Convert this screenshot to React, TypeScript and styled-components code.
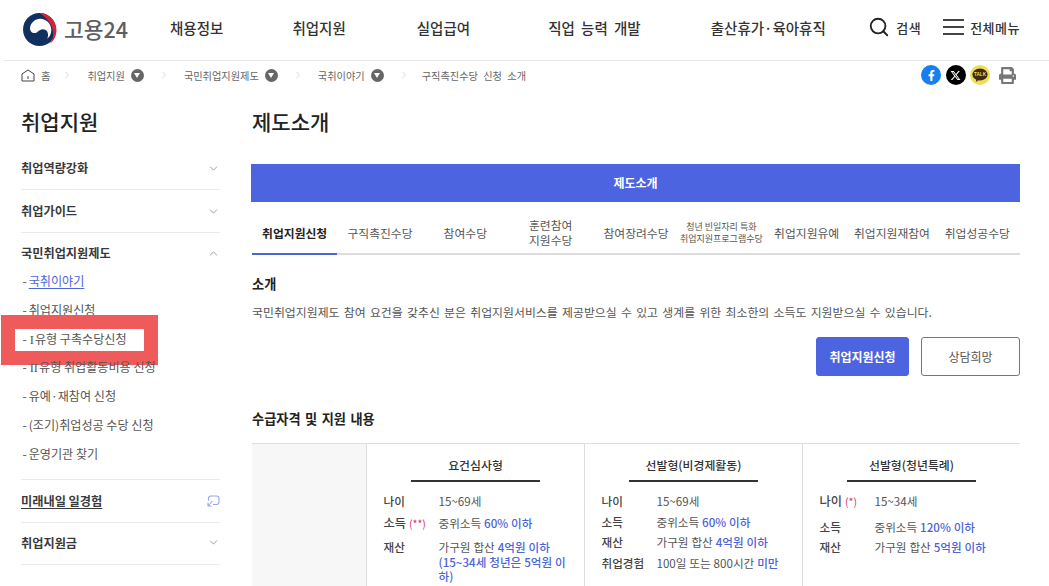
import React from "react";
import styled, { createGlobalStyle } from "styled-components";
import { FaFacebookF, FaPrint } from "react-icons/fa";
import { FaXTwitter } from "react-icons/fa6";
import { ChevronDown, ChevronUp, ChevronRight, Search } from "lucide-react";

const Global = createGlobalStyle`
  html, body { margin: 0; padding: 0; height: 586px; overflow: hidden; background: #fff; }
  body { font-family: "Noto Sans CJK KR", "Noto Sans", sans-serif; color: #333; }
  * { box-sizing: border-box; }
`;

const Page = styled.div`width: 1049px; height: 586px; overflow: hidden;`;

const Header = styled.header`
  height: 61px; margin-left: 4px; border-bottom: 1px solid #e8e8e8;
  display: flex; align-items: center; padding: 0 29px 2px 18px;
`;
const Logo = styled.div`display: flex; align-items: center; gap: 7px; width: 148px; flex: none;`;
const LogoText = styled.span`font-size: 21.5px; font-weight: 500; color: #5c5f64; line-height: 1;`;
const Nav = styled.nav`display: flex; align-items: center; gap: 70px; flex: 1; margin-bottom: 4px;`;
const NavItem = styled.a`
  font-size: 14.5px; font-weight: 500; color: #333; white-space: nowrap; word-spacing: 3px;
  &:nth-child(2) { margin-left: -1px; }
  &:nth-child(3) { margin-left: 1px; }
  &:nth-child(4) { margin-left: 8px; }
`;
const Tools = styled.div`display: flex; flex: none; align-items: center; gap: 22px; margin-bottom: 4px;`;
const Tool = styled.div`display: flex; align-items: center; gap: 6px; font-size: 13px; font-weight: 500; color: #333; letter-spacing: 0.5px; white-space: nowrap;`;
const Burger = styled.span`
  width: 21px; height: 16px;
  border-top: 2px solid #444; border-bottom: 2px solid #444; position: relative;
  &::after { content: ""; position: absolute; left: 0; right: 0; top: 5px; height: 2px; background: #444; }
`;

const Crumbs = styled.div`
  height: 29px; padding: 0 32px 1px 21px;
  display: flex; align-items: center; gap: 14px;
  font-size: 10.2px; color: #666;
`;
const CrumbItem = styled.span`display: flex; align-items: center; gap: 6px; white-space: nowrap;`;
const HomeCrumb = styled(CrumbItem)`margin-right: -3px;`;
const LastCrumb = styled(CrumbItem)`margin-left: -2px; word-spacing: 3px;`;
const CrumbDot = styled.span`
  width: 13px; height: 13px; border-radius: 50%; background: #666; position: relative;
  &::after { content: ""; position: absolute; left: 3px; top: 4.5px;
    border-left: 3.5px solid transparent; border-right: 3.5px solid transparent; border-top: 5px solid #fff; }
`;
const Share = styled.div`margin-left: auto; display: flex; align-items: center; gap: 4.5px;`;
const Round = styled.span<{ $bg: string }>`
  width: 20px; height: 20px; border-radius: 50%; background: ${(p) => p.$bg}; color: #fff;
  display: flex; align-items: center; justify-content: center;
`;
const PrintBtn = styled.span`width: 20px; height: 20px; margin-left: 2.5px; display: flex; align-items: center; justify-content: center; color: #777;`;

const Body = styled.div`display: flex; padding: 0 29px 0 21px; gap: 31px;`;
const Side = styled.aside`width: 199px; flex: none; padding-top: 13px; position: relative;`;
const SideTitle = styled.h2`margin: 0 0 8px; font-size: 21px; line-height: 36px; font-weight: 500; color: #222;`;
const SideGroup = styled.div<{ $pad: string }>`
  border-bottom: 1px solid #ebebeb;
  padding: ${(p) => p.$pad};
`;
const SideHead = styled.div`
  display: flex; justify-content: space-between; align-items: center; height: 22px;
  font-size: 12.2px; font-weight: 700; color: #3a3a3a;
`;
const SideLabel = styled.span<{ $u?: boolean }>`text-decoration: ${(p) => (p.$u ? "underline" : "none")}; text-underline-offset: 2px;`;
const SideSub = styled.ul`list-style: none; margin: 3px 0 0; padding: 0 0 0 1.5px;`;
const SubItem = styled.li<{ $link?: boolean }>`
  position: relative;
  height: 28.8px; line-height: 28.8px; font-size: 12.1px;
  color: #555; white-space: nowrap;
  &::before { content: "-"; margin-right: 2px; color: #555; }
  span { color: ${(p) => (p.$link ? "#4c64d8" : "#555")}; text-decoration: ${(p) => (p.$link ? "underline" : "none")}; text-underline-offset: 2px; }
`;
const Roman = styled.em`font-family: "Liberation Serif", serif; font-style: normal; font-size: 12.5px; margin: 0 1px;`;
const Highlight = styled.i`
  position: absolute; left: -21.5px; top: -10px; width: 157px; height: 50px;
  border: 14px solid #ef5b5b;
  pointer-events: none;
`;

const Main = styled.main`flex: 1; min-width: 0; padding-top: 13px;`;
const Title = styled.h1`margin: 0 0 25px 1px; font-size: 21px; line-height: 36px; font-weight: 500; color: #222;`;
const Bar = styled.div`
  height: 38px; padding-bottom: 1px; background: #4c64e0; color: #fff; font-size: 12px; font-weight: 700;
  display: flex; align-items: center; justify-content: center;
`;
const Tabs = styled.div`
  margin-left: 1px; height: 53px; display: grid; grid-template-columns: repeat(9, 1fr);
  border-bottom: 2px solid #ddd;
`;
const Tab = styled.div<{ $active?: boolean; $small?: boolean }>`
  display: flex; align-items: center; justify-content: center; text-align: center;
  padding-top: ${(p) => (p.$small ? "11px" : "9px")}; margin-bottom: -2px; white-space: nowrap;
  border-bottom: 2px solid ${(p) => (p.$active ? "#4c64d8" : "transparent")};
  font-size: ${(p) => (p.$small ? "9px" : "11.8px")};
  line-height: ${(p) => (p.$small ? "12px" : "15px")};
  font-weight: ${(p) => (p.$active ? 700 : 400)};
  color: ${(p) => (p.$active ? "#222" : "#555")};
`;
const Section = styled.section`margin-left: 1px;`;
const Sub = styled.h3<{ $top: number }>`
  margin: ${(p) => p.$top}px 0 0; font-size: 13.2px; line-height: 18px; font-weight: 700; color: #222; word-spacing: 1.5px;
`;
const Para = styled.p`margin: 10px 0 0; font-size: 11.9px; line-height: 18px; color: #555; white-space: nowrap; word-spacing: 1.6px;`;
const Actions = styled.div`margin-top: 16px; display: flex; justify-content: flex-end; gap: 12px;`;
const Btn = styled.button<{ $primary?: boolean }>`
  height: 39px; width: ${(p) => (p.$primary ? "93px" : "99px")}; border-radius: 3px; font: inherit;
  font-size: 12px; font-weight: ${(p) => (p.$primary ? 700 : 400)};
  background: ${(p) => (p.$primary ? "#4c64e0" : "#fff")};
  color: ${(p) => (p.$primary ? "#fff" : "#555")};
  border: 1px solid ${(p) => (p.$primary ? "#4c64e0" : "#777")};
`;
const Table = styled.div`
  margin-top: 15px; border-top: 1px solid #ddd;
  display: grid; grid-template-columns: 115px 218px 218px 217px;
  height: 160px;
`;
const Blank = styled.div`background: #f7f7f7; border-right: 1px solid #ddd;`;
const Col = styled.div<{ $last?: boolean }>`
  border-right: ${(p) => (p.$last ? "none" : "1px solid #ddd")};
  padding: 12px 16.5px 0;
`;
const ColHead = styled.div`
  width: 129px; margin: 0 auto 12px; padding-bottom: 6px; border-bottom: 2px solid #333;
  text-align: center; font-size: 11.9px; line-height: 18px; font-weight: 500; color: #333; white-space: nowrap;
`;
const Row = styled.div<{ $pb: number }>`
  display: grid; grid-template-columns: 55px 1fr; margin-bottom: ${(p) => p.$pb}px;
  font-size: 11.6px; line-height: 14.5px; color: #555; word-spacing: 0.3px;
`;
const RowKey = styled.div<{ $strong?: boolean }>`color: #444; font-weight: 500; white-space: nowrap; font-size: ${(p) => (p.$strong ? "12.2px" : "11.6px")};`;
const Mark = styled.span`color: #d6336c; font-weight: 400; font-size: 10.5px; margin-left: 3px;`;
const Hl = styled.span`color: #4c64d8; font-weight: 500;`;

const NAV = ["채용정보", "취업지원", "실업급여", "직업 능력 개발", "출산휴가·육아휴직"];
const CRUMBS = ["취업지원", "국민취업지원제도", "국취이야기"];
const SUBS = [
  { roman: "", text: "국취이야기" },
  { roman: "", text: "취업지원신청" },
  { roman: "I", text: "유형 구촉수당신청" },
  { roman: "II", text: "유형 취업활동비용 신청" },
  { roman: "", text: "유예·재참여 신청" },
  { roman: "", text: "(조기)취업성공 수당 신청" },
  { roman: "", text: "운영기관 찾기" },
];
const TABS = ["취업지원신청", "구직촉진수당", "참여수당", "훈련참여\n지원수당", "참여장려수당", "청년 빈일자리 특화\n취업지원프로그램수당", "취업지원유예", "취업지원재참여", "취업성공수당"];

const Lines = ({ text }: { text: string }) => (
  <span>
    {text.split("\n").map((t, i) => (
      <React.Fragment key={t}>{i > 0 && <br />}{t}</React.Fragment>
    ))}
  </span>
);

const LogoMark = () => (
  <svg width="35" height="33" viewBox="0 0 34 32">
    <circle cx="17" cy="16" r="16" fill="#12305f" />
    <path d="M17 0C26 0 33.5 7.5 33.5 16.5C33.5 22 31 27 27 30C30 26 31 21.5 30 17C28.5 10 23.5 4 17 0Z" fill="#d2243f" />
    <path d="M17 5.5C23 5 28.5 10 28.5 16.5C28.5 20 27 23 24.5 25C26 22 25.5 18 23 16.5C20 14.8 17.5 16 15.5 18C13.5 20 10.5 20 8.8 18C7 15.5 8 12 9.5 10C11.5 7 14 5.8 17 5.5Z" fill="#fff" />
  </svg>
);

const KakaoIcon = () => (
  <svg width="20" height="20" viewBox="0 0 20 20">
    <ellipse cx="10" cy="9.5" rx="7.6" ry="6" fill="#3f2a14" />
    <path d="M6.5 13L6 17L10 14Z" fill="#3f2a14" />
    <text x="10" y="11.2" fontSize="4.6" fontWeight="700" fill="#f3dc55" textAnchor="middle" fontFamily="Liberation Sans, sans-serif">TALK</text>
  </svg>
);

const HomeIcon = () => (
  <svg width="14" height="13" viewBox="0 0 14 13" fill="none" stroke="#444" strokeWidth="1">
    <path d="M1 5L7 1L13 5V12H1Z" />
    <path d="M7 7V10" />
  </svg>
);

const JumpIcon = () => (
  <svg width="14" height="14" viewBox="0 0 14 14" fill="none" stroke="#9aa6ea" strokeWidth="1.1">
    <path d="M5 2H10.5C12 2 13 3 13 4.5V8C13 9.5 12 10.5 10.5 10.5H7" />
    <path d="M5 2C3.5 2 2.5 3 2.5 4.5V6.5" />
    <path d="M6.5 7L2 12M2 8.5V12H5.5" />
  </svg>
);

const Chevron = () => <ChevronRight size={12} color="#ccc" strokeWidth={1.4} />;

export default function App() {
  return (
    <Page>
      <Global />
      <Header>
        <Logo>
          <LogoMark />
          <LogoText>고용24</LogoText>
        </Logo>
        <Nav>
          {NAV.map((n) => <NavItem key={n}>{n}</NavItem>)}
        </Nav>
        <Tools>
          <Tool><Search size={22} color="#222" strokeWidth={2} />검색</Tool>
          <Tool><Burger />전체메뉴</Tool>
        </Tools>
      </Header>
      <Crumbs>
        <HomeCrumb><HomeIcon />홈</HomeCrumb>
        {CRUMBS.map((c) => (
          <React.Fragment key={c}>
            <Chevron />
            <CrumbItem>{c}<CrumbDot /></CrumbItem>
          </React.Fragment>
        ))}
        <Chevron />
        <LastCrumb>구직촉진수당 신청 소개</LastCrumb>
        <Share>
          <Round $bg="#1a7fee"><FaFacebookF size={11} /></Round>
          <Round $bg="#000"><FaXTwitter size={11} /></Round>
          <Round $bg="#f2dc55"><KakaoIcon /></Round>
          <PrintBtn><FaPrint size={17} /></PrintBtn>
        </Share>
      </Crumbs>
      <Body>
        <Side>
          <SideTitle>취업지원</SideTitle>
          <SideGroup $pad="10px 0">
            <SideHead>취업역량강화<ChevronDown size={13} color="#888" strokeWidth={1.5} /></SideHead>
          </SideGroup>
          <SideGroup $pad="10px 0">
            <SideHead>취업가이드<ChevronDown size={13} color="#888" strokeWidth={1.5} /></SideHead>
          </SideGroup>
          <SideGroup $pad="9px 0 10px">
            <SideHead>국민취업지원제도<ChevronUp size={13} color="#888" strokeWidth={1.5} /></SideHead>
            <SideSub>
              {SUBS.map((s, i) => (
                <SubItem key={s.text} $link={i === 0}>
                  <span>{s.roman && <Roman>{s.roman}</Roman>}{s.text}</span>
                  {i === 2 && <Highlight />}
                </SubItem>
              ))}
            </SideSub>
          </SideGroup>
          <SideGroup $pad="10px 0">
            <SideHead><SideLabel $u>미래내일 일경험</SideLabel><JumpIcon /></SideHead>
          </SideGroup>
          <SideGroup $pad="9px 0 10px">
            <SideHead>취업지원금<ChevronDown size={13} color="#888" strokeWidth={1.5} /></SideHead>
          </SideGroup>
        </Side>
        <Main>
          <Title>제도소개</Title>
          <Bar>제도소개</Bar>
          <Tabs>
            {TABS.map((t, i) => (
              <Tab key={t} $active={i === 0} $small={i === 5}><Lines text={t} /></Tab>
            ))}
          </Tabs>
          <Section>
            <Sub $top={20}>소개</Sub>
            <Para>국민취업지원제도 참여 요건을 갖추신 분은 취업지원서비스를 제공받으실 수 있고 생계를 위한 최소한의 소득도 지원받으실 수 있습니다.</Para>
            <Actions>
              <Btn $primary>취업지원신청</Btn>
              <Btn>상담희망</Btn>
            </Actions>
            <Sub $top={34}>수급자격 및 지원 내용</Sub>
            <Table>
              <Blank />
              <Col>
                <ColHead>요건심사형</ColHead>
                <Row $pb={7}><RowKey>나이</RowKey><div>15~69세</div></Row>
                <Row $pb={9}><RowKey $strong>소득<Mark>(**)</Mark></RowKey><div>중위소득 <Hl>60% 이하</Hl></div></Row>
                <Row $pb={0}><RowKey>재산</RowKey><div>가구원 합산 <Hl>4억원 이하<br />(15~34세 청년은 5억원 이<br />하)</Hl></div></Row>
              </Col>
              <Col>
                <ColHead>선발형(비경제활동)</ColHead>
                <Row $pb={6}><RowKey>나이</RowKey><div>15~69세</div></Row>
                <Row $pb={6}><RowKey>소득</RowKey><div>중위소득 <Hl>60% 이하</Hl></div></Row>
                <Row $pb={6}><RowKey>재산</RowKey><div>가구원 합산 <Hl>4억원 이하</Hl></div></Row>
                <Row $pb={0}><RowKey>취업경험</RowKey><div>100일 또는 800시간 <Hl>미만</Hl></div></Row>
              </Col>
              <Col $last>
                <ColHead>선발형(청년특례)</ColHead>
                <Row $pb={10}><RowKey $strong>나이<Mark>(*)</Mark></RowKey><div>15~34세</div></Row>
                <Row $pb={6}><RowKey>소득</RowKey><div>중위소득 <Hl>120% 이하</Hl></div></Row>
                <Row $pb={0}><RowKey>재산</RowKey><div>가구원 합산 <Hl>5억원 이하</Hl></div></Row>
              </Col>
            </Table>
          </Section>
        </Main>
      </Body>
    </Page>
  );
}
